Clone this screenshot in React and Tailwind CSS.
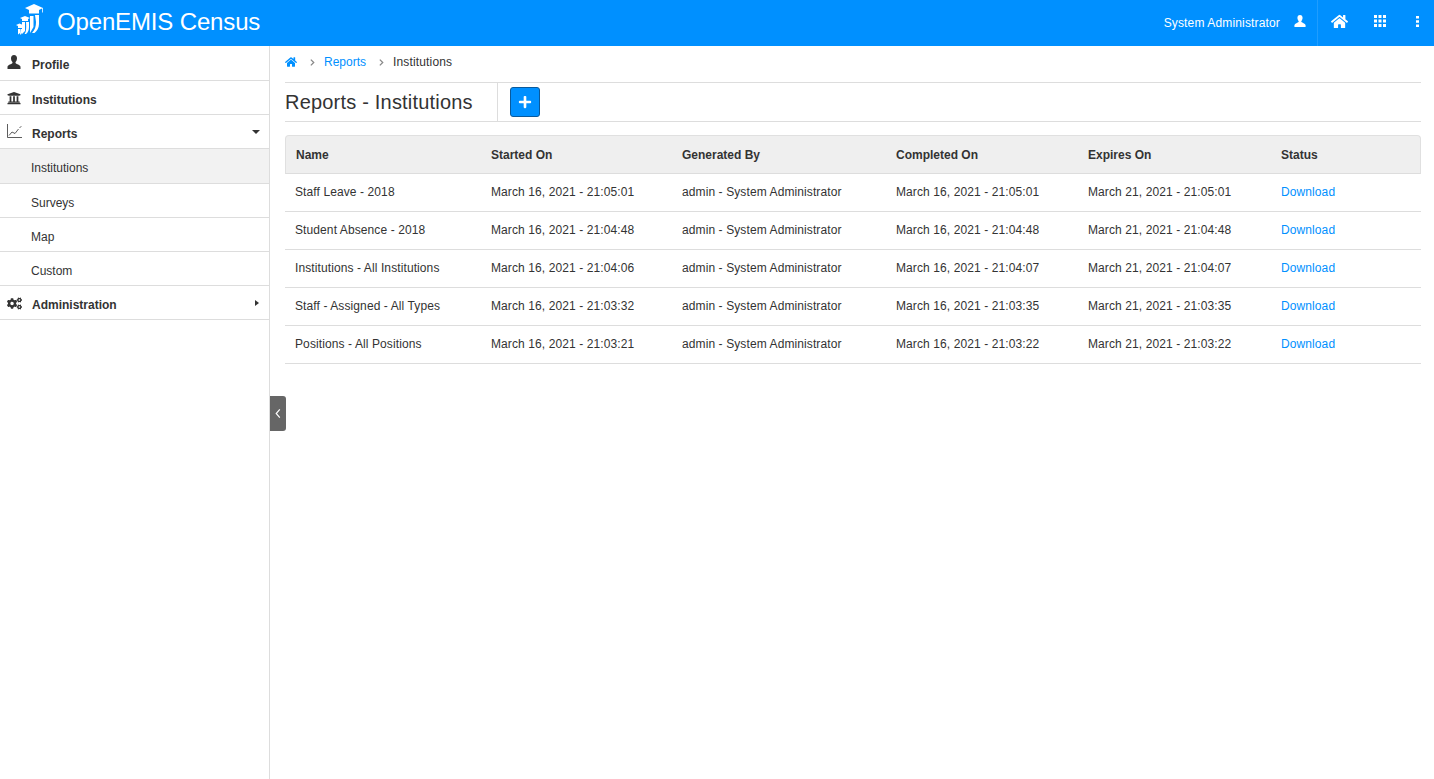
import React from "react";
import { FaHome, FaUniversity, FaCogs, FaPlus } from "react-icons/fa";

const reports = [
  { name: "Staff Leave - 2018", started: "March 16, 2021 - 21:05:01", completed: "March 16, 2021 - 21:05:01", expires: "March 21, 2021 - 21:05:01" },
  { name: "Student Absence - 2018", started: "March 16, 2021 - 21:04:48", completed: "March 16, 2021 - 21:04:48", expires: "March 21, 2021 - 21:04:48" },
  { name: "Institutions - All Institutions", started: "March 16, 2021 - 21:04:06", completed: "March 16, 2021 - 21:04:07", expires: "March 21, 2021 - 21:04:07" },
  { name: "Staff - Assigned - All Types", started: "March 16, 2021 - 21:03:32", completed: "March 16, 2021 - 21:03:35", expires: "March 21, 2021 - 21:03:35" },
  { name: "Positions - All Positions", started: "March 16, 2021 - 21:03:21", completed: "March 16, 2021 - 21:03:22", expires: "March 21, 2021 - 21:03:22" },
];

const UserIcon = ({ className }) => (
  <svg viewBox="0 0 14 14" className={className} fill="currentColor">
    <path d="M7 0C5 0 4 1.300 4 3.200c0 1.500.6 3 1.400 3.800.2.300.2 1-.1 1.300C4.500 9.300 1 9.800 .5 11.700V14h13v-2.300C13 9.800 9.500 9.300 8.700 8.300c-.3-.3-.3-1-.1-1.300C9.400 6.200 10 4.700 10 3.200 10 1.300 9 0 7 0z" />
  </svg>
);

const ChartIcon = ({ className }) => (
  <svg viewBox="0 0 15 14" className={className} fill="none" stroke="currentColor" strokeWidth="0.8">
    <path d="M.5 0v13.500H15" />
    <path d="M2 11.500l3-3.500 3 1.500 3.500-4.500" />
    <path d="M12.500 4l1.800-1.800" />
  </svg>
);

const GridIcon = ({ className }) => (
  <svg viewBox="0 0 12 12" className={className} fill="currentColor">
    {[0, 4.5, 9].map((y) =>
      [0, 4.5, 9].map((x) => <rect key={`${x}-${y}`} x={x} y={y} width="3" height="3" />)
    )}
  </svg>
);

const DotsIcon = ({ className }) => (
  <svg viewBox="0 0 3 11" className={className} fill="currentColor">
    <rect x="0" y="0" width="3" height="2.500" />
    <rect x="0" y="4.250" width="3" height="2.500" />
    <rect x="0" y="8.500" width="3" height="2.500" />
  </svg>
);

const Logo = () => (
  <svg viewBox="0 0 57 46" className="w-[57px] h-[46px] text-white shrink-0" fill="currentColor">
    <path d="M25 8l9-4 9 4-4 2v3.500H29V10z" />
    <path d="M42 8h.8v4.500H42z" />
    <path d="M30 16h3.500v11L30 33z" />
    <path d="M35 15h4v9c0 4-2 7-4.500 9H32c3-3 4-7 4-11z" />
    <path d="M20 18l5-2 5 2-2 1v2h-6v-2z" />
    <path d="M22 22h3v9l-3 3z" />
    <path d="M26 22h3v5c0 3-1 5.500-3 7h-1.500c1.500-2 2-4.500 1.500-12z" />
    <path d="M16 25l3.500-1.500L23 25l-1 1v2h-4v-2z" />
    <path d="M18 29h2v4l-2 1.500z" />
    <path d="M20.500 29h2v3l-1.500 2.500h-1z" />
  </svg>
);

const NavRow = ({ icon, label, caret }) => (
  <div className="h-[34px] flex items-center border-b border-[#dddddd] pl-[7px] pr-[9px] pt-[4px]">
    <span className="w-[25px] flex justify-start text-[#333333]">{icon}</span>
    <span className="font-bold text-[12px] text-[#333333]">{label}</span>
    <span className="ml-auto">{caret}</span>
  </div>
);

const SubRow = ({ label, active }) => (
  <div className={`flex items-center border-b border-[#dddddd] pl-[31px] text-[12px] text-[#333333] ${active ? "h-[35px] pt-[3px] bg-[#f2f2f2]" : "h-[34px] pt-[4px]"}`}>
    {label}
  </div>
);

const Chevron = () => (
  <svg viewBox="0 0 6 8" className="w-[5px] h-[7px] text-[#888888]" fill="none" stroke="currentColor" strokeWidth="1.500">
    <path d="M1 .5L4.500 4 1 7.500" />
  </svg>
);

const bodyCols = "grid grid-cols-[206px_191px_214px_192px_193px_1fr]";
const headCols = "grid grid-cols-[205px_191px_214px_192px_193px_1fr]";

export default function App() {
  return (
    <div className="w-[1434px] h-[779px] overflow-hidden bg-white font-['Liberation_Sans',Arial,sans-serif] text-[#333333] flex flex-col">
      <header className="h-[46px] bg-[#0090ff] flex items-center text-white shrink-0">
        <Logo />
        <span className="text-[24px] tracking-[-0.15px] -mt-[2px]">OpenEMIS Census</span>
        <div className="ml-auto flex items-center h-full">
          <span className="text-[12px] tracking-[0.15px] -mt-[1px]">System Administrator</span>
          <UserIcon className="w-[12px] h-[12px] ml-[14px] -mt-[4px]" />
          <div className="w-px h-full bg-[#1f9dff] ml-[11px]" />
          <FaHome className="text-[17px] ml-[13px] -mt-[4px]" />
          <GridIcon className="w-[12px] h-[12px] ml-[26px] -mt-[4px]" />
          <DotsIcon className="w-[3px] h-[11px] ml-[30px] mr-[15px] -mt-[4px]" />
        </div>
      </header>

      <div className="flex flex-1 min-h-0">
        <aside className="relative w-[270px] shrink-0 border-r border-[#dddddd]">
          <div className="h-[35px] flex items-center border-b border-[#dddddd] pl-[7px] pt-[3px]">
            <span className="w-[25px] text-[#333333]"><UserIcon className="w-[14px] h-[14px] -mt-[5px]" /></span>
            <span className="font-bold text-[12px]">Profile</span>
          </div>
          <NavRow label="Institutions" icon={<FaUniversity className="text-[14px] -mt-[3px]" />} />
          <NavRow
            label="Reports"
            icon={<ChartIcon className="w-[15px] h-[14px] -mt-[6px]" />}
            caret={<span className="block w-0 h-0 border-x-[4px] border-x-transparent border-t-[4px] border-t-[#333333] -mt-[3px]" />}
          />
          <SubRow label="Institutions" active />
          <SubRow label="Surveys" />
          <SubRow label="Map" />
          <SubRow label="Custom" />
          <NavRow
            label="Administration"
            icon={<FaCogs className="text-[15px] -mt-[3px]" />}
            caret={<span className="block w-0 h-0 border-y-[3.500px] border-y-transparent border-l-[4px] border-l-[#333333] mr-[1px] -mt-[4px]" />}
          />
          <button className="absolute left-[270px] top-[350px] w-[16px] h-[35px] bg-[#666666] rounded-r-[3px] flex items-center justify-center text-white">
            <svg viewBox="0 0 6 10" className="w-[6px] h-[9px]" fill="none" stroke="currentColor" strokeWidth="1.300">
              <path d="M5 .5L1 5l4 4.500" />
            </svg>
          </button>
        </aside>

        <main className="flex-1 pl-[15px] pr-[13px] min-w-0">
          <div className="h-[37px] flex items-center border-b border-[#dddddd] text-[12px] pb-[4px]">
            <FaHome className="text-[12px] text-[#0090ff]" />
            <span className="ml-[13px]"><Chevron /></span>
            <span className="ml-[9px] text-[#0090ff]">Reports</span>
            <span className="ml-[13px]"><Chevron /></span>
            <span className="ml-[9px] tracking-[0.15px]">Institutions</span>
          </div>

          <div className="h-[39px] flex items-center border-b border-[#dddddd]">
            <h1 className="w-[213px] h-full flex items-center border-r border-[#dddddd] text-[20px] tracking-[0.2px] text-[#333333]">
              Reports - Institutions
            </h1>
            <button className="ml-[12px] w-[30px] h-[30px] rounded-[3px] bg-[#0090ff] border border-[#0a5a9c] flex items-center justify-center text-white">
              <FaPlus className="text-[14px]" />
            </button>
          </div>

          <div className="mt-[13px]">
            <div className={`${headCols} h-[39px] items-center bg-[#efefef] border border-[#e0e0e0] border-b-[#dddddd] rounded-t-[4px] font-bold text-[12px]`}>
              <div className="pl-[10px]">Name</div>
              <div>Started On</div>
              <div>Generated By</div>
              <div>Completed On</div>
              <div>Expires On</div>
              <div>Status</div>
            </div>
            {reports.map((report, index) => (
              <div key={index} className={`${bodyCols} h-[38px] items-center border-b border-[#dddddd] text-[12px] tracking-[0.1px] pb-[2px]`}>
                <div className="pl-[10px]">{report.name}</div>
                <div>{report.started}</div>
                <div>admin - System Administrator</div>
                <div>{report.completed}</div>
                <div>{report.expires}</div>
                <div className="text-[#0090ff]">Download</div>
              </div>
            ))}
          </div>
        </main>
      </div>
    </div>
  );
}
